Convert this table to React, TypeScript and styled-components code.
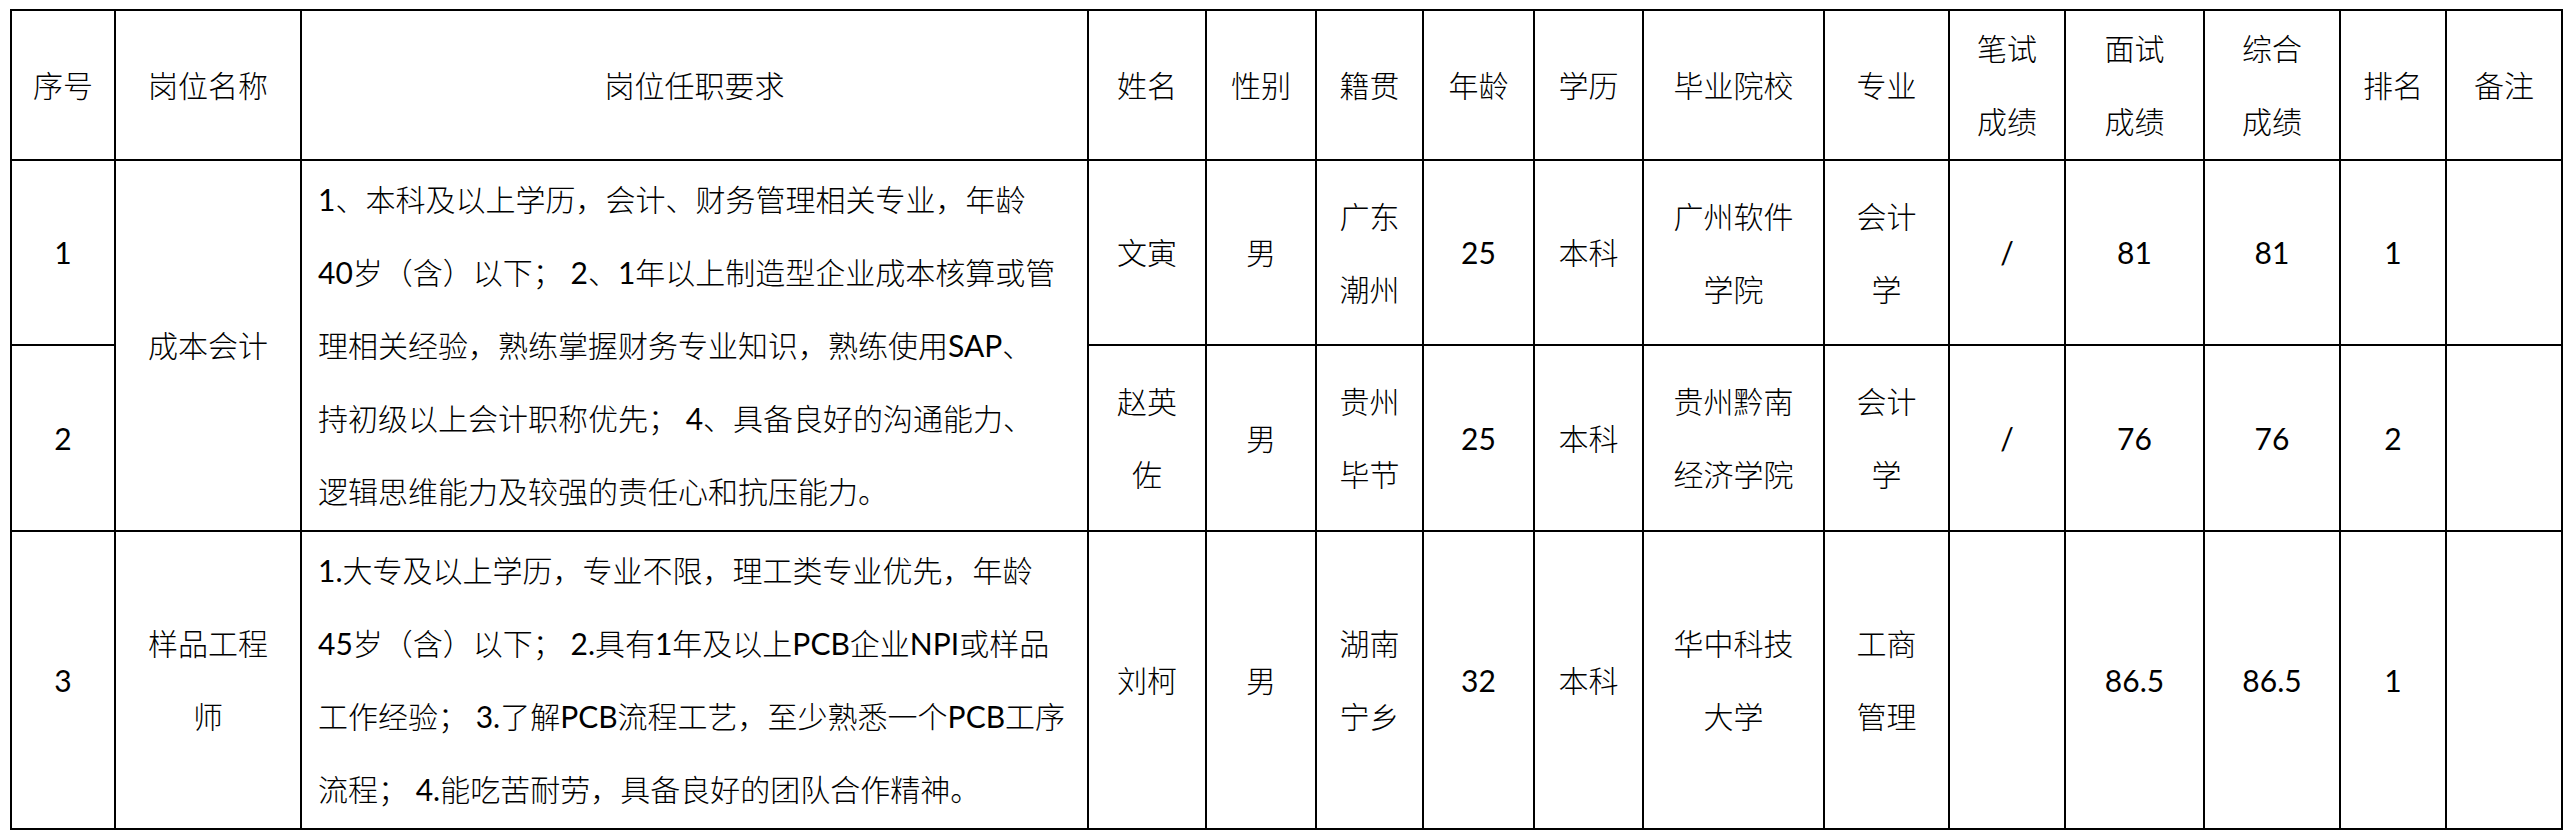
import React from "react";
import styled, { createGlobalStyle } from "styled-components";

const GlobalStyle = createGlobalStyle`
  html, body {
    margin: 0;
    padding: 0;
    background: #ffffff;
  }
  body {
    font-family: "Lato", "Noto Sans CJK SC Light", "Noto Sans CJK SC DemiLight", "Noto Sans CJK SC", sans-serif;
    color: #000000;
  }
`;

const Page = styled.div`
  padding: 9px 0 0 10px;
  width: 2572px;
  height: 834px;
  box-sizing: border-box;
  overflow: hidden;
`;

const Grid = styled.div`
  display: grid;
  grid-template-columns: 102px 184px 785px 116px 108px 105px 109px 107px 179px 123px 114px 137px 134px 104px 114px;
  grid-template-rows: 148px 183px 184px 296px;
  gap: 2px;
  padding: 2px;
  background: #000000;
  width: max-content;
`;

const Cell = styled.div<{ $span?: number; $align?: "center" | "left" }>`
  background: #ffffff;
  grid-row: ${(p) => (p.$span ? `span ${p.$span}` : "auto")};
  display: flex;
  flex-direction: column;
  justify-content: center;
  align-items: ${(p) => (p.$align === "left" ? "flex-start" : "center")};
  padding: ${(p) => (p.$align === "left" ? "0 8px 0 16px" : "0")};
  font-size: 30px;
  line-height: 73px;
  text-align: ${(p) => (p.$align === "left" ? "left" : "center")};
  white-space: nowrap;
  overflow: hidden;
`;

const Line = styled.span`
  display: block;
`;

type CellDef = { lines: string[]; span?: number; align?: "center" | "left" };

const c = (text: string, span?: number): CellDef => ({
  lines: text ? text.split("|") : [],
  span,
});

const header: CellDef[] = [
  c("序号"),
  c("岗位名称"),
  c("岗位任职要求"),
  c("姓名"),
  c("性别"),
  c("籍贯"),
  c("年龄"),
  c("学历"),
  c("毕业院校"),
  c("专业"),
  c("笔试|成绩"),
  c("面试|成绩"),
  c("综合|成绩"),
  c("排名"),
  c("备注"),
];

const req1 = [
  "1、本科及以上学历，会计、财务管理相关专业，年龄",
  "40岁（含）以下； 2、1年以上制造型企业成本核算或管",
  "理相关经验，熟练掌握财务专业知识，熟练使用SAP、",
  "持初级以上会计职称优先； 4、具备良好的沟通能力、",
  "逻辑思维能力及较强的责任心和抗压能力。",
];

const req3 = [
  "1.大专及以上学历，专业不限，理工类专业优先，年龄",
  "45岁（含）以下； 2.具有1年及以上PCB企业NPI或样品",
  "工作经验； 3.了解PCB流程工艺，至少熟悉一个PCB工序",
  "流程； 4.能吃苦耐劳，具备良好的团队合作精神。",
];

const row1: CellDef[] = [
  c("1"),
  c("成本会计", 2),
  { lines: req1, span: 2, align: "left" },
  c("文寅"),
  c("男"),
  c("广东|潮州"),
  c("25"),
  c("本科"),
  c("广州软件|学院"),
  c("会计|学"),
  c("/"),
  c("81"),
  c("81"),
  c("1"),
  c(""),
];

const row2: CellDef[] = [
  c("2"),
  c("赵英|佐"),
  c("男"),
  c("贵州|毕节"),
  c("25"),
  c("本科"),
  c("贵州黔南|经济学院"),
  c("会计|学"),
  c("/"),
  c("76"),
  c("76"),
  c("2"),
  c(""),
];

const row3: CellDef[] = [
  c("3"),
  c("样品工程|师"),
  { lines: req3, align: "left" },
  c("刘柯"),
  c("男"),
  c("湖南|宁乡"),
  c("32"),
  c("本科"),
  c("华中科技|大学"),
  c("工商|管理"),
  c(""),
  c("86.5"),
  c("86.5"),
  c("1"),
  c(""),
];

const all = [...header, ...row1, ...row2, ...row3];

export default function App() {
  return (
    <>
      <GlobalStyle />
      <Page>
        <Grid>
          {all.map((cell, i) => (
            <Cell key={i} $span={cell.span} $align={cell.align}>
              {cell.lines.map((l, j) => (
                <Line key={j}>{l}</Line>
              ))}
            </Cell>
          ))}
        </Grid>
      </Page>
    </>
  );
}
